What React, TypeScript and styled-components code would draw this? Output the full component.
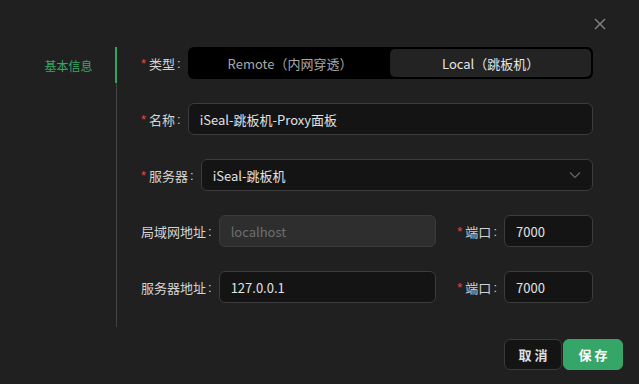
import React from 'react';
import styled, { createGlobalStyle } from 'styled-components';

const GlobalStyle = createGlobalStyle`
  html, body {
    margin: 0;
    padding: 0;
    background: #202020;
  }
  body {
    font-family: 'Noto Sans CJK SC', 'Noto Sans', sans-serif;
    font-size: 13px;
    color: #d6d6d6;
  }
  * { box-sizing: border-box; }
`;

const App: React.FC = () => {
  return (
    <Dialog>
      <GlobalStyle />
      <Header>
        <CloseButton aria-label="close">
          <svg width="12" height="12" viewBox="0 0 12 12">
            <path d="M1 1L11 11M11 1L1 11" stroke="#8a8a8a" strokeWidth="1.3" />
          </svg>
        </CloseButton>
      </Header>
      <Body>
        <Nav>
          <NavTab $active>基本信息</NavTab>
        </Nav>
        <Form>
          <Row>
            <Label $required>类型</Label>
            <Segmented>
              <Segment>Remote（内网穿透）</Segment>
              <Segment $active>Local（跳板机）</Segment>
            </Segmented>
          </Row>
          <Row>
            <Label $required>名称</Label>
            <Input>iSeal-跳板机-Proxy面板</Input>
          </Row>
          <Row>
            <Label $required>服务器</Label>
            <Input>
              <span>iSeal-跳板机</span>
              <Chevron width="12" height="8" viewBox="0 0 12 8">
                <path d="M1 1.5L6 6.5L11 1.5" stroke="#6a6a6a" strokeWidth="1.1" fill="none" />
              </Chevron>
            </Input>
          </Row>
          <Row>
            <Label>局域网地址</Label>
            <Input $disabled>localhost</Input>
            <Label $required $gap>端口</Label>
            <Input $width={89}>7000</Input>
          </Row>
          <Row>
            <Label>服务器地址</Label>
            <Input>127.0.0.1</Input>
            <Label $required $gap>端口</Label>
            <Input $width={89}>7000</Input>
          </Row>
        </Form>
      </Body>
      <Footer>
        <Button>取消</Button>
        <Button $primary>保存</Button>
      </Footer>
    </Dialog>
  );
};

export default App;

const Dialog = styled.div`
  width: 639px;
  height: 384px;
  background: #202020;
  display: flex;
  flex-direction: column;
`;

const Header = styled.div`
  height: 47px;
  display: flex;
  justify-content: flex-end;
  align-items: flex-start;
  padding: 18px 33px 0 0;
`;

const CloseButton = styled.button`
  border: none;
  background: none;
  padding: 0;
  width: 12px;
  height: 12px;
  display: flex;
  cursor: pointer;
`;

const Body = styled.div`
  display: flex;
  height: 280px;
`;

const Nav = styled.div`
  width: 117px;
  border-right: 1px solid #444;
  display: flex;
  flex-direction: column;
`;

const NavTab = styled.div<{ $active?: boolean }>`
  height: 36px;
  margin-right: -1px;
  padding-left: 22px;
  display: flex;
  align-items: center;
  justify-content: center;
  font-size: 12px;
  color: ${p => (p.$active ? '#35a866' : '#ccc')};
  border-right: 2px solid ${p => (p.$active ? '#2fa55e' : 'transparent')};
`;

const Form = styled.div`
  flex: 1;
  padding: 0 46px 0 24px;
  display: flex;
  flex-direction: column;
  gap: 24px;
`;

const Row = styled.div`
  display: flex;
  align-items: center;
  height: 32px;
`;

const Label = styled.label<{ $required?: boolean; $gap?: boolean }>`
  flex: none;
  display: flex;
  align-items: center;
  margin-left: ${p => (p.$gap ? '21px' : '0')};
  padding-right: 7px;
  color: #d4d4d4;
  font-size: 13px;
  white-space: nowrap;

  &::before {
    content: ${p => (p.$required ? "'*'" : 'none')};
    color: #e5484d;
    font-size: 13px;
    margin-right: 3px;
    font-family: 'Liberation Sans', sans-serif;
  }

  &::after {
    content: ':';
    margin-left: 2px;
    font-family: 'Liberation Sans', sans-serif;
  }
`;

const Input = styled.div<{ $disabled?: boolean; $width?: number }>`
  flex: ${p => (p.$width ? 'none' : '1')};
  width: ${p => (p.$width ? `${p.$width}px` : 'auto')};
  height: 32px;
  display: flex;
  align-items: center;
  justify-content: space-between;
  padding: 0 11px;
  border-radius: 6px;
  border: 1px solid ${p => (p.$disabled ? '#3a3a3a' : '#3c3c3c')};
  background: ${p => (p.$disabled ? '#2e2e2e' : '#141414')};
  color: ${p => (p.$disabled ? '#6e6e6e' : '#e2e2e2')};
  font-size: 13px;
`;

const Chevron = styled.svg`
  flex: none;
`;

const Segmented = styled.div`
  flex: 1;
  height: 32px;
  display: grid;
  grid-template-columns: 1fr 1fr;
  padding: 2px;
  border-radius: 6px;
  background: #000;
`;

const Segment = styled.div<{ $active?: boolean }>`
  display: flex;
  align-items: center;
  justify-content: center;
  border-radius: 5px;
  font-size: 13px;
  color: ${p => (p.$active ? '#e6e6e6' : '#a8a8a8')};
  background: ${p => (p.$active ? '#232323' : 'transparent')};
`;

const Footer = styled.div`
  display: flex;
  justify-content: flex-end;
  gap: 1px;
  padding: 12px 16px 0 0;
`;

const Button = styled.button<{ $primary?: boolean }>`
  height: 31px;
  width: ${p => (p.$primary ? '60px' : '58px')};
  padding: 0;
  border-radius: 6px;
  border: 1px solid ${p => (p.$primary ? '#36a668' : '#3a3a3a')};
  background: ${p => (p.$primary ? '#36a668' : '#141414')};
  color: ${p => (p.$primary ? '#fff' : '#e0e0e0')};
  font-family: 'Noto Sans CJK SC', sans-serif;
  font-size: 13px;
  font-weight: 700;
  letter-spacing: 3px;
  text-indent: 3px;
  cursor: pointer;
`;
